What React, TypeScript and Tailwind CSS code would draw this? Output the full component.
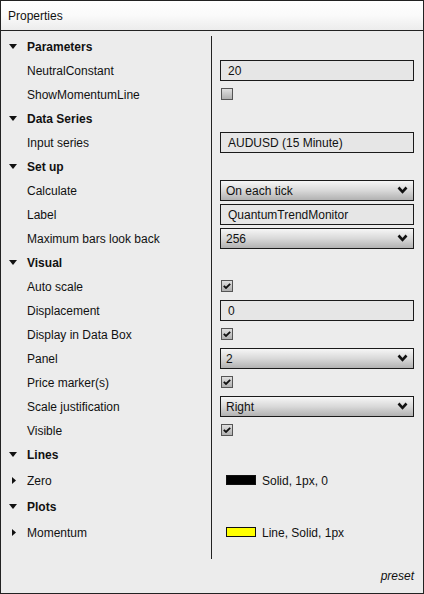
import React from "react";

type Left = { kind: "section" | "item" | "sub"; label: string };
type Right =
  | { kind: "none" }
  | { kind: "input"; value: string }
  | { kind: "check"; checked: boolean }
  | { kind: "select"; value: string }
  | { kind: "swatch"; color: string; text: string };

const rows: { left: Left; right: Right; tall?: boolean }[] = [
  { left: { kind: "section", label: "Parameters" }, right: { kind: "none" } },
  { left: { kind: "item", label: "NeutralConstant" }, right: { kind: "input", value: "20" } },
  { left: { kind: "item", label: "ShowMomentumLine" }, right: { kind: "check", checked: false } },
  { left: { kind: "section", label: "Data Series" }, right: { kind: "none" } },
  { left: { kind: "item", label: "Input series" }, right: { kind: "input", value: "AUDUSD (15 Minute)" } },
  { left: { kind: "section", label: "Set up" }, right: { kind: "none" } },
  { left: { kind: "item", label: "Calculate" }, right: { kind: "select", value: "On each tick" } },
  { left: { kind: "item", label: "Label" }, right: { kind: "input", value: "QuantumTrendMonitor" } },
  { left: { kind: "item", label: "Maximum bars look back" }, right: { kind: "select", value: "256" } },
  { left: { kind: "section", label: "Visual" }, right: { kind: "none" } },
  { left: { kind: "item", label: "Auto scale" }, right: { kind: "check", checked: true } },
  { left: { kind: "item", label: "Displacement" }, right: { kind: "input", value: "0" } },
  { left: { kind: "item", label: "Display in Data Box" }, right: { kind: "check", checked: true } },
  { left: { kind: "item", label: "Panel" }, right: { kind: "select", value: "2" } },
  { left: { kind: "item", label: "Price marker(s)" }, right: { kind: "check", checked: true } },
  { left: { kind: "item", label: "Scale justification" }, right: { kind: "select", value: "Right" } },
  { left: { kind: "item", label: "Visible" }, right: { kind: "check", checked: true } },
  { left: { kind: "section", label: "Lines" }, right: { kind: "none" } },
  { left: { kind: "sub", label: "Zero" }, right: { kind: "swatch", color: "#000000", text: "Solid, 1px, 0" }, tall: true },
  { left: { kind: "section", label: "Plots" }, right: { kind: "none" } },
  { left: { kind: "sub", label: "Momentum" }, right: { kind: "swatch", color: "#ffff00", text: "Line, Solid, 1px" }, tall: true },
];

function DownTri() {
  return (
    <svg width="8" height="5" viewBox="0 0 8 5" className="ml-[8px] mr-[10px] shrink-0">
      <polygon points="0,0 8,0 4,5" fill="#111" />
    </svg>
  );
}

function RightTri() {
  return (
    <svg width="4" height="7" viewBox="0 0 4 7" className="ml-[11px] mr-[11px] shrink-0">
      <polygon points="0,0 4,3.5 0,7" fill="#111" />
    </svg>
  );
}

function LeftCell({ left }: { left: Left }) {
  if (left.kind === "section") {
    return (
      <div className="flex items-center h-full">
        <DownTri />
        <span className="font-bold pt-[2px]">{left.label}</span>
      </div>
    );
  }
  if (left.kind === "sub") {
    return (
      <div className="flex items-center h-full">
        <RightTri />
        <span className="pt-[2px]">{left.label}</span>
      </div>
    );
  }
  return (
    <div className="flex items-center h-full pl-[26px]">
      <span className="pt-[2px]">{left.label}</span>
    </div>
  );
}

function Chevron() {
  return (
    <svg width="11" height="8" viewBox="0 0 11 8" className="shrink-0">
      <polyline points="1.5,1.5 5.5,5.8 9.5,1.5" fill="none" stroke="#111" strokeWidth="2.6" />
    </svg>
  );
}

function RightCell({ right }: { right: Right }) {
  switch (right.kind) {
    case "none":
      return <div className="h-full" />;
    case "input":
      return (
        <div className="flex items-center h-full">
          <div className="w-[194px] h-[21px] border border-[#1a1a1a] bg-[#e6e6e6] flex items-center pl-[7px] pt-[2px]">
            {right.value}
          </div>
        </div>
      );
    case "select":
      return (
        <div className="flex items-center h-full">
          <div className="w-[194px] h-[21px] border border-[#1a1a1a] bg-gradient-to-b from-[#f6f6f6] via-[#d9d9d9] to-[#b2b2b2] flex items-center justify-between pl-[5px] pr-[5px]">
            <span className="pt-[2px]">{right.value}</span>
            <Chevron />
          </div>
        </div>
      );
    case "check":
      return (
        <div className="flex items-center h-full">
          <div className="w-[12px] h-[12px] ml-[1px] border border-[#555] bg-gradient-to-b from-[#e0e0e0] to-[#b0b0b0] flex items-center justify-center">
            {right.checked && (
              <svg width="8" height="6" viewBox="0 0 8 6">
                <polyline points="0.8,2.8 3,5 7.2,0.8" fill="none" stroke="#111" strokeWidth="1.8" />
              </svg>
            )}
          </div>
        </div>
      );
    case "swatch":
      return (
        <div className="flex items-center h-full pl-[6px]">
          <div
            className="w-[30px] h-[10px] border border-[#111] mr-[6px]"
            style={{ backgroundColor: right.color }}
          />
          <span className="pt-[2px]">{right.text}</span>
        </div>
      );
  }
}

export default function App() {
  return (
    <div
      className="w-[424px] h-[594px] border border-[#222] bg-[#ececec] flex flex-col text-[12px] text-[#111] leading-none"
      style={{ fontFamily: '"Liberation Sans", Arial, sans-serif' }}
    >
      <div className="h-[30px] shrink-0 border-b border-[#222] bg-gradient-to-b from-white via-[#fafafa] to-[#ececec] flex items-center pl-[7px] pt-[1px]">
        Properties
      </div>
      <div className="flex-1 flex flex-col pt-[3px]">
        <div className="flex">
          <div className="w-[210px] flex flex-col">
            {rows.map((r, i) => (
              <div key={i} className={r.tall ? "h-[28px]" : "h-[24px]"}>
                <LeftCell left={r.left} />
              </div>
            ))}
          </div>
          <div className="w-px h-[523px] mt-[2px] bg-[#222]" />
          <div className="flex-1 flex flex-col pl-[8px]">
            {rows.map((r, i) => (
              <div key={i} className={r.tall ? "h-[28px]" : "h-[24px]"}>
                <RightCell right={r.right} />
              </div>
            ))}
          </div>
        </div>
        <div className="mt-[10px] flex justify-end pr-[9px] italic pt-[1px]">preset</div>
      </div>
    </div>
  );
}
